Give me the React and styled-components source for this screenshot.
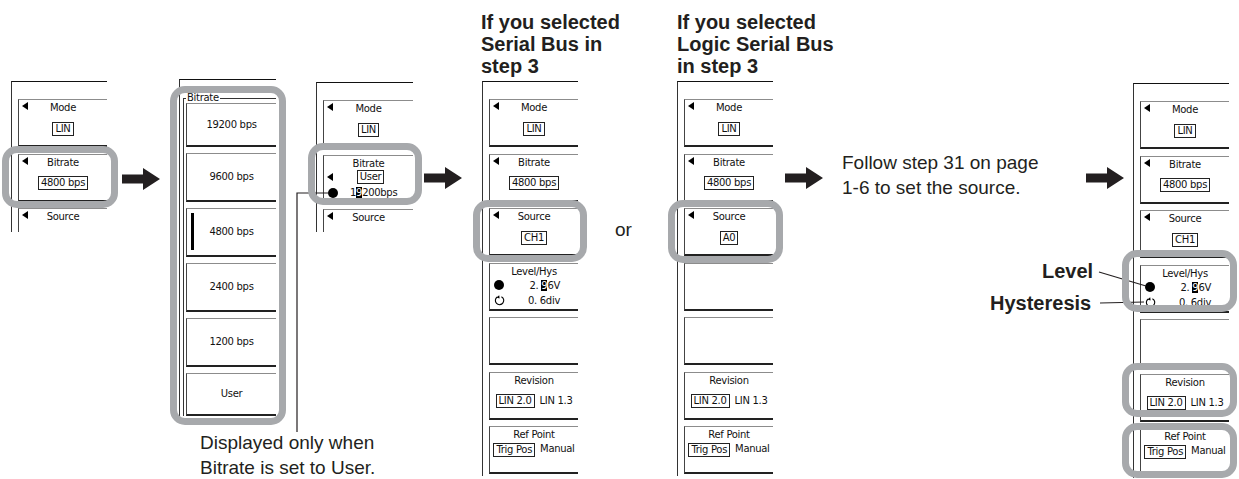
import React from "react";
import styled, { createGlobalStyle } from "styled-components";

const GlobalStyle = createGlobalStyle`
  html, body { margin: 0; padding: 0; background: #fff; }
  body { font-family: "Liberation Sans", Arial, sans-serif; color: #231f20; }
`;

const Canvas = styled.div`
  position: relative;
  width: 1239px;
  height: 479px;
  overflow: hidden;
  background: #fff;
`;

/* diagram nodes sit at their place on the sheet */
const Node = styled.div`
  position: absolute;
  left: ${(p) => p.$x}px;
  top: ${(p) => p.$y}px;
`;

const Frame = styled.div`
  box-sizing: border-box;
  width: ${(p) => p.$w || 96}px;
  height: ${(p) => p.$h}px;
  border-top: 1px solid #111;
  border-left: 1px solid #333;
  padding: ${(p) => p.$top || 17}px 0 0 ${(p) => p.$pad || 6}px;
  display: flex;
  flex-direction: column;
  gap: 6.5px;
  overflow: hidden;
  font-family: "DejaVu Sans", Verdana, sans-serif;
  font-size: 10px;
  letter-spacing: -0.3px;
  color: #111;
`;

const Key = styled.div`
  position: relative;
  flex: none;
  box-sizing: border-box;
  height: ${(p) => p.$h || 48}px;
  border-left: 1px solid #444;
  border-top: 1px solid #8c8c8c;
  border-bottom: 2px solid #222;
  display: flex;
  flex-direction: column;
  align-items: center;
  justify-content: ${(p) => (p.$menu ? "center" : "flex-start")};
  padding-top: ${(p) => (p.$menu ? 0 : 2)}px;
`;

const Tri = styled.span`
  position: absolute;
  left: 3px;
  top: ${(p) => (p.$mid ? "50%" : "2px")};
  margin-top: ${(p) => (p.$mid ? -4 : 0)}px;
  width: 0;
  height: 0;
  border-top: 4px solid transparent;
  border-bottom: 4px solid transparent;
  border-right: 6px solid #000;
`;

const Title = styled.div`
  line-height: 12px;
  white-space: nowrap;
`;

const Body = styled.div`
  flex: 1;
  align-self: stretch;
  display: flex;
  justify-content: center;
  align-items: ${(p) => (p.$top ? "flex-start" : "center")};
  gap: 5px;
  padding-top: ${(p) => (p.$top ? 2 : 0)}px;
  padding-bottom: ${(p) => (p.$top ? 0 : 2)}px;
  white-space: nowrap;
`;

const Val = styled.span`
  border: 1px solid #222;
  padding: 0 2px;
  line-height: 12px;
`;

const Plain = styled.span`
  line-height: 12px;
`;

const Inv = styled.span`
  background: #000;
  color: #fff;
`;

const Row = styled.div`
  position: relative;
  align-self: stretch;
  height: 16px;
  display: flex;
  align-items: center;
  justify-content: ${(p) => p.$justify || "space-between"};
  padding: 0 ${(p) => p.$right ?? 18}px 0 4px;
  white-space: nowrap;
`;

const Dot = styled.span`
  flex: none;
  width: 10px;
  height: 10px;
  border-radius: 50%;
  background: #000;
`;

const Bar = styled.span`
  position: absolute;
  left: 4px;
  top: 4px;
  bottom: 5px;
  width: 3px;
  background: #000;
`;

const Group = styled.div`
  position: relative;
  border-left: 1px solid #333;
  border-top: 1px solid #333;
  padding: 4px 0 0 2px;
  display: flex;
  flex-direction: column;
  gap: 6px;
`;

const Legend = styled.span`
  position: absolute;
  top: -7px;
  left: 2px;
  padding: 0 1px;
  background: #fff;
  line-height: 12px;
`;

const Ring = styled.div`
  position: absolute;
  box-sizing: border-box;
  left: ${(p) => p.$x}px;
  top: ${(p) => p.$y}px;
  width: ${(p) => p.$w}px;
  height: ${(p) => p.$h}px;
  border: 7px solid #a7a9ac;
  border-radius: 15px;
  pointer-events: none;
`;

const Caption = styled.div`
  position: absolute;
  left: ${(p) => p.$x}px;
  top: ${(p) => p.$y}px;
  font-size: ${(p) => (p.$bold ? 20 : 19)}px;
  font-weight: ${(p) => (p.$bold ? 700 : 400)};
  line-height: ${(p) => p.$lh || 25}px;
  white-space: nowrap;
  color: #231f20;
`;

const Overlay = styled.svg`
  position: absolute;
  left: 0;
  top: 0;
  pointer-events: none;
`;

const HysIcon = () => (
  <svg width="11" height="11" viewBox="0 0 11 11">
    <path d="M3.2 2 A4.2 4.2 0 1 0 7.4 1.7" fill="none" stroke="#000" strokeWidth="1.1" />
    <path d="M5.2 0.2 L5.6 3.4 L2.4 2.6 Z" fill="#000" />
  </svg>
);

const Arrow = ({ x, y }) => (
  <path
    transform={`translate(${x} ${y})`}
    d="M0 -4.5 H21 V-11 L38 0 L21 11 V4.5 H0 Z"
    fill="#231f20"
  />
);

const SoftKey = ({ title, value, arrow }) => (
  <Key>
    {arrow && <Tri />}
    <Title>{title}</Title>
    <Body>{value && <Val>{value}</Val>}</Body>
  </Key>
);

const LevelKey = () => (
  <Key>
    <Title>Level/Hys</Title>
    <Row>
      <Dot />
      <span>
        2. <Inv>9</Inv>6V
      </span>
    </Row>
    <Row>
      <HysIcon />
      <span>0. 6div</span>
    </Row>
  </Key>
);

const RevisionKey = () => (
  <Key>
    <Title>Revision</Title>
    <Body>
      <Val>LIN 2.0</Val>
      <Plain>LIN 1.3</Plain>
    </Body>
  </Key>
);

const RefKey = () => (
  <Key>
    <Title>Ref Point</Title>
    <Body $top>
      <Val>Trig Pos</Val>
      <Plain>Manual</Plain>
    </Body>
  </Key>
);

const FullMenu = ({ source, level }) => (
  <>
    <SoftKey title="Mode" value="LIN" arrow />
    <SoftKey title="Bitrate" value="4800 bps" arrow />
    <SoftKey title="Source" value={source} arrow />
    {level ? <LevelKey /> : <Key />}
    <Key />
    <RevisionKey />
    <RefKey />
  </>
);

const rates = [
  { label: "19200 bps", h: 44 },
  { label: "9600 bps", h: 49 },
  { label: "4800 bps", h: 49, on: true },
  { label: "2400 bps", h: 49 },
  { label: "1200 bps", h: 49 },
  { label: "User", h: 43 },
];

export default function App() {
  return (
    <>
      <GlobalStyle />
      <Canvas>
        <Node $x={11} $y={81}>
          <Frame $h={151}>
            <SoftKey title="Mode" value="LIN" arrow />
            <SoftKey title="Bitrate" value="4800 bps" arrow />
            <SoftKey title="Source" arrow />
          </Frame>
        </Node>

        <Node $x={179} $y={79}>
          <Frame $w={97} $h={340} $top={18} $pad={3}>
            <Group>
              <Legend>Bitrate</Legend>
              {rates.map((r) => (
                <Key key={r.label} $h={r.h} $menu>
                  {r.on && <Bar />}
                  <Title>{r.label}</Title>
                </Key>
              ))}
            </Group>
          </Frame>
        </Node>

        <Node $x={316} $y={82}>
          <Frame $w={97} $h={150}>
            <SoftKey title="Mode" value="LIN" arrow />
            <Key>
              <Title>Bitrate</Title>
              <Row $justify="center" $right={0}>
                <Tri $mid />
                <Val>User</Val>
              </Row>
              <Row $justify="flex-start" $right={0}>
                <Dot />
                <span style={{ marginLeft: 12 }}>
                  1<Inv>9</Inv>200bps
                </span>
              </Row>
            </Key>
            <SoftKey title="Source" arrow />
          </Frame>
        </Node>

        <Caption $x={481} $y={11} $bold $lh={22}>
          If you selected
          <br />
          Serial Bus in
          <br />
          step 3
        </Caption>
        <Node $x={482} $y={81}>
          <Frame $h={395}>
            <FullMenu source="CH1" level />
          </Frame>
        </Node>

        <Caption $x={615} $y={217}>or</Caption>

        <Caption $x={677} $y={11} $bold $lh={22}>
          If you selected
          <br />
          Logic Serial Bus
          <br />
          in step 3
        </Caption>
        <Node $x={677} $y={81}>
          <Frame $h={395}>
            <FullMenu source="A0" />
          </Frame>
        </Node>

        <Caption $x={842} $y={150}>
          Follow step 31 on page
          <br />
          1-6 to set the source.
        </Caption>

        <Node $x={1133} $y={83}>
          <Frame $h={395}>
            <FullMenu source="CH1" level />
          </Frame>
        </Node>

        <Caption $x={1042} $y={258} $bold $lh={26}>Level</Caption>
        <Caption $x={990} $y={290} $bold $lh={26}>Hysteresis</Caption>

        <Caption $x={200} $y={430}>
          Displayed only when
          <br />
          Bitrate is set to User.
        </Caption>

        <Overlay width="1239" height="479">
          <Arrow x={122} y={179} />
          <Arrow x={424} y={178} />
          <Arrow x={785} y={178} />
          <Arrow x={1086} y={178} />
          <path d="M328 193 H297 V432" fill="none" stroke="#231f20" strokeWidth="1.2" />
          <path d="M1099 272 L1146 286" fill="none" stroke="#231f20" strokeWidth="1.2" />
          <path d="M1100 303 L1144 302" fill="none" stroke="#231f20" strokeWidth="1.2" />
        </Overlay>

        <Ring $x={2} $y={146} $w={116} $h={62} />
        <Ring $x={170} $y={86} $w={116} $h={339} />
        <Ring $x={308} $y={143} $w={114} $h={62} />
        <Ring $x={473} $y={200} $w={114} $h={62} />
        <Ring $x={668} $y={200} $w={115} $h={63} />
        <Ring $x={1122} $y={250} $w={115} $h={62} />
        <Ring $x={1122} $y={363} $w={115} $h={54} />
        <Ring $x={1122} $y={423} $w={115} $h={55} />
      </Canvas>
    </>
  );
}
